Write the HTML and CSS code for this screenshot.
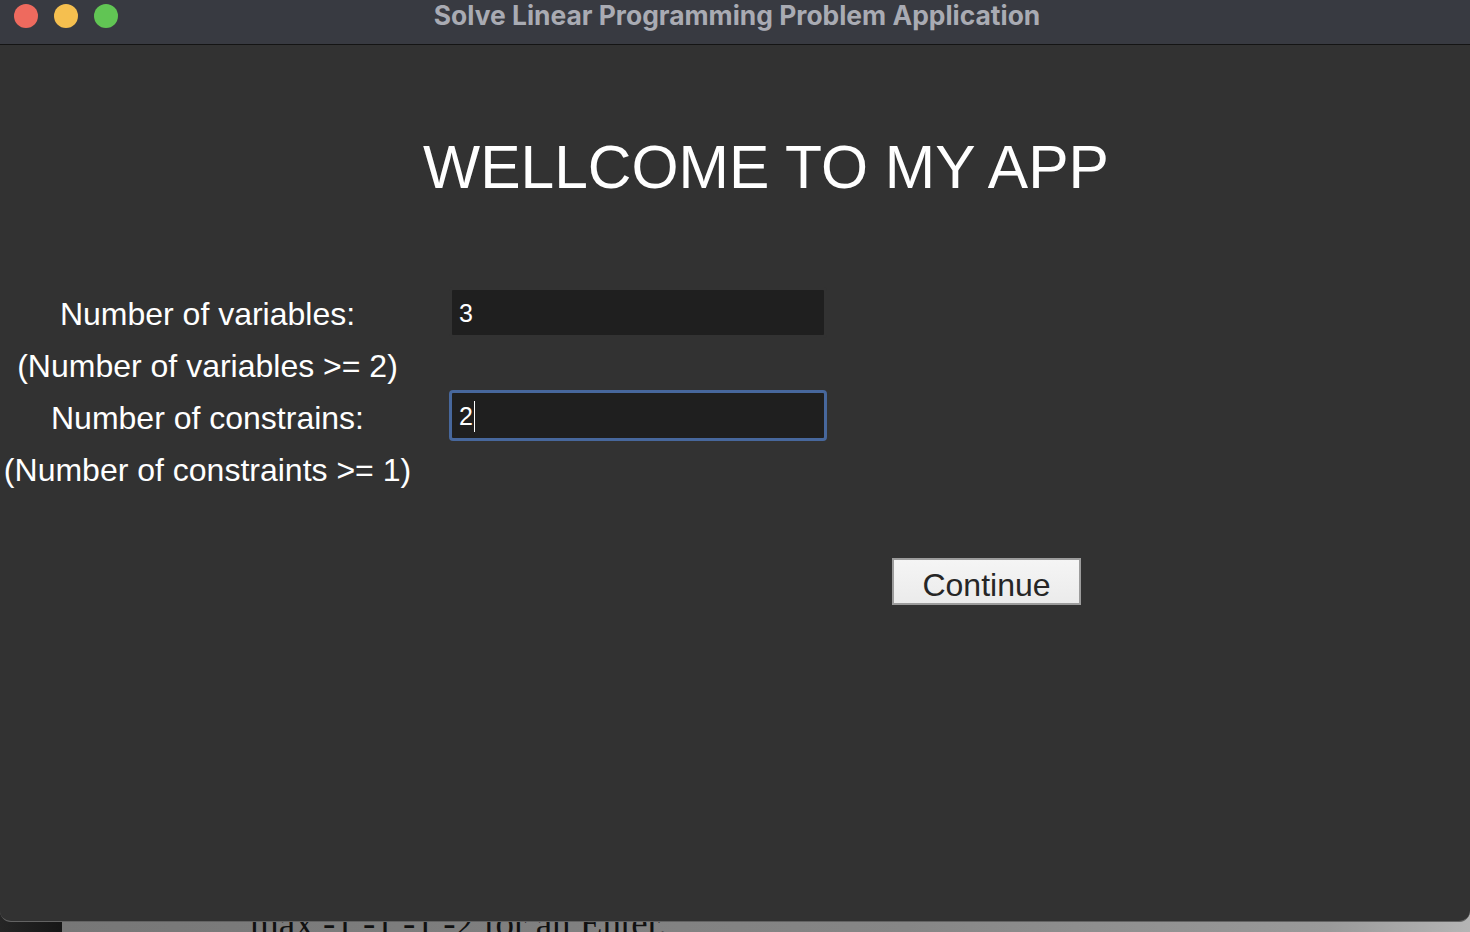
FILE: index.html
```html
<!DOCTYPE html>
<html lang="en">
<head>
<meta charset="utf-8">
<title>Solve Linear Programming Problem Application</title>
<link rel="stylesheet" href="styles.css">
</head>
<body>
<div class="desktop">
  <div class="window">
    <div class="titlebar">
      <div class="lights">
        <span class="light red"></span>
        <span class="light yellow"></span>
        <span class="light green"></span>
      </div>
      <div class="title">Solve Linear Programming Problem Application</div>
      <div class="spacer"></div>
    </div>
    <div class="content">
      <h1 class="heading">WELLCOME TO MY APP</h1>
      <div class="form">
        <div class="label r1">Number of variables:</div>
        <div class="field r1"><div class="entry">3</div></div>
        <div class="label r2">(Number of variables &gt;= 2)</div>
        <div class="label r3">Number of constrains:</div>
        <div class="field focused r3"><div class="entry">2<span class="caret"></span></div></div>
        <div class="label r4">(Number of constraints &gt;= 1)</div>
      </div>
      <div class="actions">
        <button class="btn">Continue</button>
      </div>
    </div>
  </div>
  <div class="below">
    <div class="dock"></div>
    <div class="doc"><span class="doc-text">max -1 -1 -1 -2 for an Enter.</span></div>
  </div>
</div>
</body>
</html>
```
FILE: styles.css
```css
html, body {
  margin: 0;
  padding: 0;
}
body {
  width: 1470px;
  height: 932px;
  overflow: hidden;
  background: #7d7d7d;
  font-family: "Liberation Sans", Arial, sans-serif;
}
.desktop {
  display: flex;
  flex-direction: column;
  height: 932px;
}
.window {
  position: relative;
  z-index: 1;
  height: 922px;
  box-sizing: border-box;
  background: #323232;
  border-radius: 0 0 11px 11px;
  border-bottom: 1px solid #636363;
  display: flex;
  flex-direction: column;
  overflow: hidden;
}
.titlebar {
  height: 44px;
  flex: none;
  background: #383a41;
  border-bottom: 1px solid #141414;
  display: grid;
  grid-template-columns: 1fr auto 1fr;
  align-items: start;
}
.lights {
  display: flex;
  gap: 16px;
  padding: 4px 0 0 14px;
}
.light {
  width: 24px;
  height: 24px;
  border-radius: 50%;
  display: block;
}
.red { background: #ee6a5e; }
.yellow { background: #f5bf4f; }
.green { background: #61c554; }
.title {
  font-family: Inter, "Noto Sans", sans-serif;
  font-weight: 700;
  font-size: 26.4px;
  line-height: 28px;
  color: #a9abb3;
  padding: 1px 0 0 4px;
}
.content {
  flex: 1;
  display: flex;
  flex-direction: column;
  padding-top: 87px;
}
.heading {
  margin: 0;
  font-weight: 400;
  font-size: 60.5px;
  line-height: 70px;
  color: #ffffff;
  text-align: center;
  padding-left: 62px;
}
.form {
  margin-top: 86px;
  display: grid;
  grid-template-columns: 415px 378px;
  grid-template-rows: repeat(4, 52px);
  column-gap: 34px;
  align-items: start;
}
.label {
  grid-column: 1;
  font-size: 32px;
  line-height: 52px;
  color: #ffffff;
  text-align: center;
  white-space: nowrap;
}
.r1 { grid-row: 1; }
.r2 { grid-row: 2; }
.r3 { grid-row: 3; }
.r4 { grid-row: 4; }
.field {
  grid-column: 2;
  margin-top: -1px;
  border: 3px solid transparent;
  border-radius: 4px;
  background: #1f1f1f;
}
.field.r1 {
  border-color: #323232;
}
.field.focused {
  margin-top: -2px;
  border-color: #47679c;
}
.entry {
  height: 45px;
  box-sizing: border-box;
  padding: 1px 0 0 7px;
  font-size: 25px;
  line-height: 43px;
  color: #ffffff;
  display: flex;
  align-items: center;
}
.caret {
  display: inline-block;
  width: 1px;
  height: 31px;
  background: #ffffff;
  margin-left: 1px;
}
.actions {
  margin-top: 62px;
  padding-left: 892px;
  display: flex;
}
.btn {
  width: 189px;
  height: 47px;
  box-sizing: border-box;
  border: 2px solid #9c9c9c;
  background: linear-gradient(#f5f5f5, #ebebeb);
  padding: 7px 0 0 0;
  margin: 0;
  font-family: "Liberation Sans", Arial, sans-serif;
  font-size: 32px;
  line-height: 36px;
  color: #262626;
  text-align: center;
  display: block;
}
.below {
  margin-top: -12px;
  height: 22px;
  display: flex;
  overflow: hidden;
}
.dock {
  width: 62px;
  flex: none;
  background: linear-gradient(90deg, #262626, #161616);
}
.doc {
  flex: 1;
  background: linear-gradient(90deg, #777777, #868686 60%, #9a9a9a 90%, #b5b5b5);
  padding-left: 188px;
  overflow: hidden;
}
.doc-text {
  display: block;
  margin-top: -5px;
  font-family: "Liberation Serif", "Times New Roman", serif;
  font-size: 37px;
  line-height: 37px;
  color: #111111;
  white-space: nowrap;
}
```
